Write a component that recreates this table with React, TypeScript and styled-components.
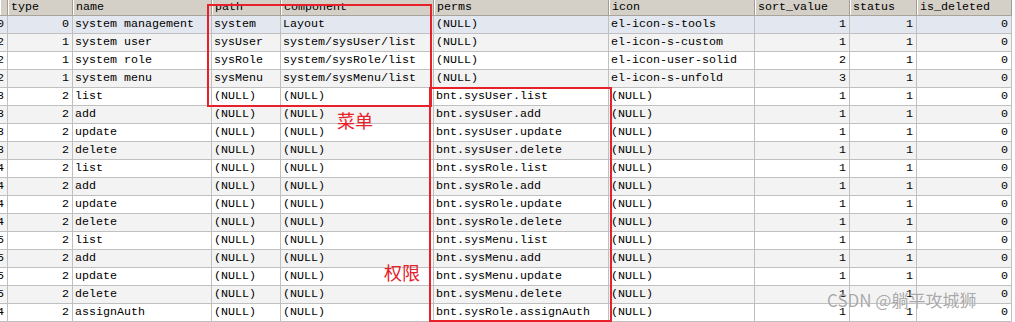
import * as React from 'react';
import styled, { createGlobalStyle } from 'styled-components';

const GlobalStyle = createGlobalStyle`
  html, body {
    margin: 0;
    padding: 0;
    background: #ffffff;
    overflow: hidden;
  }
`;

const columns = '8px 65px 139px 69px 153px 175px 146px 95px 67px 95px';

type Row = {
  pid: number;
  type: number;
  name: string;
  path: string;
  component: string;
  perms: string;
  icon: string;
  sort: number;
  status: number;
  deleted: number;
};

const N = '(NULL)';

const rows: Row[] = [
  { pid: 0, type: 0, name: 'system management', path: 'system', component: 'Layout', perms: N, icon: 'el-icon-s-tools', sort: 1, status: 1, deleted: 0 },
  { pid: 2, type: 1, name: 'system user', path: 'sysUser', component: 'system/sysUser/list', perms: N, icon: 'el-icon-s-custom', sort: 1, status: 1, deleted: 0 },
  { pid: 2, type: 1, name: 'system role', path: 'sysRole', component: 'system/sysRole/list', perms: N, icon: 'el-icon-user-solid', sort: 2, status: 1, deleted: 0 },
  { pid: 2, type: 1, name: 'system menu', path: 'sysMenu', component: 'system/sysMenu/list', perms: N, icon: 'el-icon-s-unfold', sort: 3, status: 1, deleted: 0 },
  { pid: 3, type: 2, name: 'list', path: N, component: N, perms: 'bnt.sysUser.list', icon: N, sort: 1, status: 1, deleted: 0 },
  { pid: 3, type: 2, name: 'add', path: N, component: N, perms: 'bnt.sysUser.add', icon: N, sort: 1, status: 1, deleted: 0 },
  { pid: 3, type: 2, name: 'update', path: N, component: N, perms: 'bnt.sysUser.update', icon: N, sort: 1, status: 1, deleted: 0 },
  { pid: 3, type: 2, name: 'delete', path: N, component: N, perms: 'bnt.sysUser.delete', icon: N, sort: 1, status: 1, deleted: 0 },
  { pid: 4, type: 2, name: 'list', path: N, component: N, perms: 'bnt.sysRole.list', icon: N, sort: 1, status: 1, deleted: 0 },
  { pid: 4, type: 2, name: 'add', path: N, component: N, perms: 'bnt.sysRole.add', icon: N, sort: 1, status: 1, deleted: 0 },
  { pid: 4, type: 2, name: 'update', path: N, component: N, perms: 'bnt.sysRole.update', icon: N, sort: 1, status: 1, deleted: 0 },
  { pid: 4, type: 2, name: 'delete', path: N, component: N, perms: 'bnt.sysRole.delete', icon: N, sort: 1, status: 1, deleted: 0 },
  { pid: 5, type: 2, name: 'list', path: N, component: N, perms: 'bnt.sysMenu.list', icon: N, sort: 1, status: 1, deleted: 0 },
  { pid: 5, type: 2, name: 'add', path: N, component: N, perms: 'bnt.sysMenu.add', icon: N, sort: 1, status: 1, deleted: 0 },
  { pid: 5, type: 2, name: 'update', path: N, component: N, perms: 'bnt.sysMenu.update', icon: N, sort: 1, status: 1, deleted: 0 },
  { pid: 5, type: 2, name: 'delete', path: N, component: N, perms: 'bnt.sysMenu.delete', icon: N, sort: 1, status: 1, deleted: 0 },
  { pid: 4, type: 2, name: 'assignAuth', path: N, component: N, perms: 'bnt.sysRole.assignAuth', icon: N, sort: 1, status: 1, deleted: 0 },
];

const headers = ['', 'type', 'name', 'path', 'component', 'perms', 'icon', 'sort_value', 'status', 'is_deleted'];

const Screen = styled.div`
  position: relative;
  width: 1015px;
  height: 322px;
  overflow: hidden;
  font-family: 'Liberation Mono', 'Courier New', monospace;
  font-size: 11.67px;
  color: #000;
`;

const Grid = styled.div`
  display: flex;
  flex-direction: column;
  width: 1012px;
`;

const HeaderRow = styled.div`
  display: grid;
  grid-template-columns: ${columns};
  height: 16px;
  background: #d4d0c8;
  border-bottom: 1px solid #a8a49c;
  box-sizing: border-box;
`;

const HeaderCell = styled.div`
  box-sizing: border-box;
  border-right: 1px solid #a09c94;
  box-shadow: inset 1px 0 0 #ffffff;
  padding: 0 3px;
  line-height: 15px;
  white-space: nowrap;
  overflow: hidden;
`;

type Tone = 'selected' | 'odd' | 'even';

const tones: Record<Tone, string> = {
  selected: '#e3e7ef',
  odd: '#f3f3f3',
  even: '#ffffff',
};

const DataRow = styled.div<{ $tone: Tone }>`
  display: grid;
  grid-template-columns: ${columns};
  height: 18px;
  background: ${(p) => tones[p.$tone]};
`;

const Cell = styled.div<{ $num?: boolean }>`
  box-sizing: border-box;
  border-right: 1px solid #c0c0c0;
  border-bottom: 1px solid #c0c0c0;
  padding: ${(p) => (p.$num ? '0 3px 0 0' : '0 0 0 2px')};
  text-align: ${(p) => (p.$num ? 'right' : 'left')};
  line-height: 17px;
  white-space: nowrap;
  overflow: hidden;
  direction: ${(p) => (p.$num ? 'rtl' : 'ltr')};
`;

const Marker = styled.div<{ $x: number; $y: number; $w: number; $h: number }>`
  position: absolute;
  left: ${(p) => p.$x}px;
  top: ${(p) => p.$y}px;
  width: ${(p) => p.$w}px;
  height: ${(p) => p.$h}px;
  border: 2px solid #e8202a;
  box-sizing: border-box;
  pointer-events: none;
`;

const Label = styled.div<{ $x: number; $y: number }>`
  position: absolute;
  left: ${(p) => p.$x}px;
  top: ${(p) => p.$y}px;
  font-family: 'Noto Sans CJK SC', sans-serif;
  font-size: 18px;
  line-height: 20px;
  color: #e8202a;
`;

const Watermark = styled.div`
  position: absolute;
  left: 827px;
  top: 289px;
  font-family: 'Noto Sans CJK SC', 'Noto Sans', sans-serif;
  font-size: 17px;
  line-height: 22px;
  color: rgba(140, 140, 140, 0.75);
  text-shadow: 0 0 1px rgba(255, 255, 255, 0.9);
  white-space: nowrap;
`;

export default function App() {
  return (
    <Screen>
      <GlobalStyle />
      <Grid>
        <HeaderRow>
          {headers.map((h, i) => (
            <HeaderCell key={i}>{h}</HeaderCell>
          ))}
        </HeaderRow>
        {rows.map((r, i) => (
          <DataRow key={i} $tone={i === 0 ? 'selected' : i % 2 ? 'odd' : 'even'}>
            <Cell $num>{r.pid}</Cell>
            <Cell $num>{r.type}</Cell>
            <Cell>{r.name}</Cell>
            <Cell>{r.path}</Cell>
            <Cell>{r.component}</Cell>
            <Cell>{r.perms}</Cell>
            <Cell>{r.icon}</Cell>
            <Cell $num>{r.sort}</Cell>
            <Cell $num>{r.status}</Cell>
            <Cell $num>{r.deleted}</Cell>
          </DataRow>
        ))}
      </Grid>
      <Marker $x={207} $y={4} $w={225} $h={103} />
      <Marker $x={429} $y={87} $w={183} $h={235} />
      <Label $x={337} $y={110}>菜单</Label>
      <Label $x={384} $y={262}>权限</Label>
      <Watermark>CSDN @躺平攻城狮</Watermark>
    </Screen>
  );
}
